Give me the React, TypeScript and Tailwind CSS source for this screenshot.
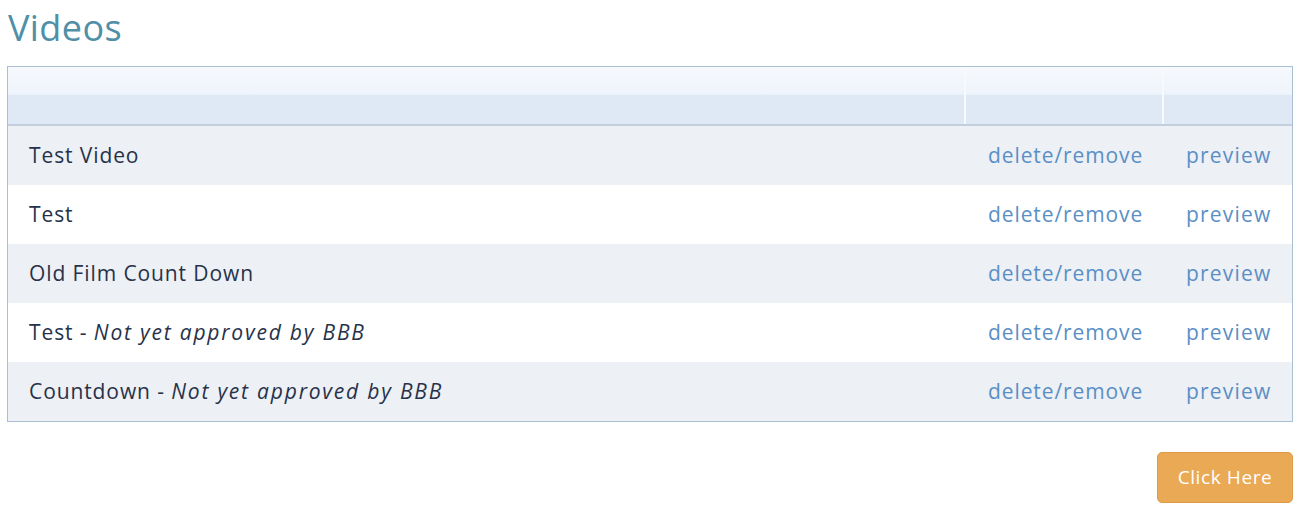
import React from "react";

const rows: { name: string; note?: string }[] = [
  { name: "Test Video" },
  { name: "Test" },
  { name: "Old Film Count Down" },
  { name: "Test", note: "Not yet approved by BBB" },
  { name: "Countdown", note: "Not yet approved by BBB" },
];

export default function App() {
  return (
    <div className="w-[1301px] h-[512px] bg-white px-[7px] pt-[6px]" style={{ fontFamily: "'Open Sans', 'Noto Sans', sans-serif" }}>
      <h1 className="text-[36px] leading-[44px] text-[#4f8fa7] pl-px tracking-[0.4px]">Videos</h1>
      <div className="mt-[16px] w-[1286px] border border-[#a9bfd6]">
        <div className="flex h-[59px] border-b-2 border-[#c3cfdd] bg-[linear-gradient(#f6f9fd_0%,#eef4fb_48%,#dfe8f5_49%,#dfe8f5_100%)]">
          <div className="w-[958px] border-r-2 border-[#f7f9fc]" />
          <div className="w-[198px] border-r-2 border-[#f7f9fc]" />
          <div className="flex-1" />
        </div>
        {rows.map((r, i) => (
          <div key={i} className={`flex items-center h-[59px] text-[21px] tracking-[0.9px] ${i % 2 === 0 ? "bg-[#edf0f5]" : "bg-white"}`}>
            <div className="w-[958px] pl-[21px] text-[#27324a] whitespace-nowrap">
              {r.name}
              {r.note && (
                <>
                  {" - "}
                  <i className="tracking-[1.8px]">{r.note}</i>
                </>
              )}
            </div>
            <div className="w-[198px] pl-[22px] text-[#5a8fc6]">delete/remove</div>
            <div className="flex-1 pl-[22px] text-[#5a8fc6] tracking-[1.2px]">preview</div>
          </div>
        ))}
      </div>
      <div className="flex justify-end mt-[30px] w-[1286px]">
        <button className="w-[136px] h-[51px] rounded-[5px] bg-[#eaa955] border border-[#e09a45] text-white text-[19px] tracking-[0.6px]">Click Here</button>
      </div>
    </div>
  );
}
